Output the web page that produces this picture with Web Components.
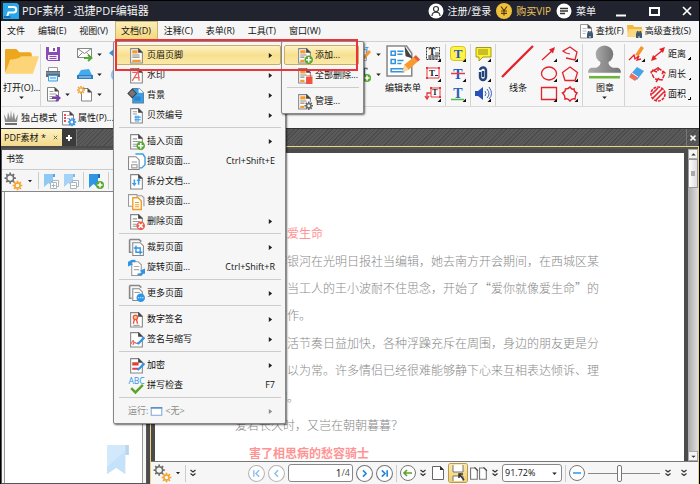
<!DOCTYPE html>
<html>
<head>
<meta charset="utf-8">
<title>PDF编辑器</title>
<style>
html, body { margin: 0; height: 100%; background: #000; overflow: hidden; }
body { font: 9px/12px "Open Sans", "Noto Sans CJK SC", sans-serif; color: #111; }
</style>
</head>
<body>
<app-window></app-window>
<script>
const T = (x, y, s, c, t, extra = '') => `<text x="${x}" y="${y}" font-size="${s}" fill="${c}" text-anchor="middle" font-family="Liberation Serif, serif" ${extra}>${t}</text>`;
const PAGE = '<path d="M2.5 1.500h7.500l3.500 3.500v10h-11z" fill="#fff" stroke="#858585"/><path d="M9.500 1l4.500 4.500h-4.500z" fill="#444"/>';
const LINES = '<path d="M4.500 5.500h4M4.500 8h6.500M4.500 10.500h6.500M4.500 12.500h4" stroke="#999"/>';
const PLUS = '<circle cx="12" cy="12" r="4" fill="#5aa832"/><path d="M12 9.500v5M9.500 12h5" stroke="#fff" stroke-width="1.500"/>';
const TICK = '<path d="M16 12.500v3.500h-3.500z" fill="#111"/>';
const BOXES = '<g fill="#fff" stroke="#a9b4bd"><path d="M9.500 7.500h6v6h-6z"/><path d="M7.500 9.500h6v6h-6z"/></g>';
const gear = (cx, cy, r, c) => `<g transform="translate(${cx} ${cy})"><circle r="${r}" fill="none" stroke="${c}" stroke-width="1.300"/>` +
  [0, 45, 90, 135].map(a => `<path transform="rotate(${a})" d="M0 ${-r - 2}v1.800M0 ${r + .2}v1.800" stroke="${c}" stroke-width="1.500"/>`).join('') + `</g>`;
const PENCIL = (c = '#f59a36') => `<path d="M6 14l1-3 6-7 2 2-6 7z" fill="${c}"/><path d="M6 14l1-3 2 2z" fill="#f9d9a5"/>`;
const BINOC = '<path d="M9 15v-4l1-3h1.500l.5 2 .5-2h1.500l1 3v4h-2.500v-2h-1v2z" fill="#3d5872"/>';
const ICONS = {
  logo: '<path d="M0 0h14l2 2v14h-16z" fill="#27a7ea"/><path d="M5 4h5.500a2.500 2.500 0 0 1 0 5.500h-5l-1.500 4.500" fill="none" stroke="#fff" stroke-width="2"/><path d="M5 7h5" stroke="#27a7ea"/><path d="M1 13h6l1 2h-7z" fill="#156fb8"/>',
  user: '<circle cx="8" cy="8" r="7.500" fill="#fff"/><circle cx="8" cy="6" r="2.500" fill="none" stroke="#333" stroke-width="1.200"/><path d="M4 13c0-5 8-5 8 0" fill="none" stroke="#333" stroke-width="1.200"/>',
  coin: '<circle cx="8" cy="8" r="8" fill="#f0c23c"/><path d="M5 3.500l3 4 3-4M8 7.500v5M5 8h6M5 10.300h6" stroke="#5b3b10" fill="none" stroke-width="1.200"/>',
  list: '<circle cx="8" cy="8" r="7.500" fill="#fff"/><path d="M4 5.500h8M4 8h8M4 10.500h5" stroke="#333" stroke-width="1.300"/>',
  min: '<path d="M3 12.500h10" stroke="#fff" stroke-width="2"/>',
  max: '<path d="M4 5h9v7h-9z" fill="none" stroke="#fff" stroke-width="2"/>',
  close: '<path d="M4 4l8 8M12 4l-8 8" stroke="#fff" stroke-width="1.700"/>',
  find: PAGE.replace(/#858585/, '#999') + '<path d="M4.500 5.500h4M4.500 8h4M4.500 10.500h3" stroke="#bbb"/>' + BINOC,
  afind: '<path d="M0 2h6l1 2h8v10h-14z" fill="#f5b836"/><path d="M0 14l2-8h14l-2 8z" fill="#fbd77e"/>' + BINOC,
  open: '<path d="M0 27V5q0-1 1-1h10l3 3h10q2 0 2 2v5l-20 2z" fill="#eda71f"/><path d="M0 28l5-14q8 0 11-3h17l-6 17z" fill="#fdd477"/>',
  save: '<path d="M1 1h14v14h-12l-2-2z" fill="#8a4bb5"/><path d="M4 1h8v5h-8z" fill="#fff"/><path d="M3 9h10v5h-10z" fill="#f5eefa"/><path d="M4.500 10.500h7M4.500 12.500h7" stroke="#8a4bb5"/><path d="M9 2v3" stroke="#8a4bb5" stroke-width="2"/>',
  print: '<path d="M3.500 1.500h9v5h-9z" fill="#fff" stroke="#999"/><path d="M1 5h14v6h-14z" fill="#5b6b78"/><path d="M1 6h14v2h-14z" fill="#7b8b97"/><path d="M3.500 9.500h9v5.500h-9z" fill="#dff1fd" stroke="#3a9de0"/><path d="M5 12h6" stroke="#3a9de0"/>',
  export: PAGE + LINES + '<path d="M7 12h7M11 9l3.500 3-3.500 3" stroke="#7a3fb0" stroke-width="2" fill="none"/>',
  mail: '<path d="M.5 2.500h14v9h-14z" fill="#fff" stroke="#888"/><path d="M.5 2.500l7 5 7-5M.5 11.500l5-5M14.500 11.500l-5-5" stroke="#888" fill="none"/><path d="M7 12h7M11 9l3.500 3-3.500 3" stroke="#55a532" stroke-width="1.800" fill="none"/>',
  scan: '<path d="M4 4l8-1 3 6h-14z" fill="#45a9ee"/><path d="M0 9h16v4h-16z" fill="#2b7fc1"/><path d="M2 11h12" stroke="#bfe2fa"/>',
  newp: '<path d="M4.500 2.500h6.500l3.500 3.500v9h-10z" fill="#fff" stroke="#858585"/><path d="M10.500 2l4.500 4.500h-4.500z" fill="#444"/><path d="M4 0v8M0 4h8M1 1l6 6M7 1l-6 6" stroke="#f5a12c" stroke-width="1.500"/><circle cx="4" cy="4" r="1.500" fill="#fff"/>',
  undo: '<path d="M16 10c0-4-6-4-13-3M7 3l-5 4 5 4" fill="none" stroke="#2d94e8" stroke-width="2.500"/>',
  redo: '<path d="M12 14a6 6 0 1 1 2-8" fill="none" stroke="#8cc7f5" stroke-width="2"/>',
  fdoc: '<path d="M1.500 3.500h9v11h-9z" fill="#fff" stroke="#9ab"/><path d="M3 7h5M3 9h5M11 1v6M9.500 1.500h3" stroke="#3d9de8"/>' + PENCIL(),
  tplus: T(8, 9, 11, '#555', 'T', 'stroke="#555" stroke-width=".3"') + '<circle cx="11" cy="12" r="4" fill="#5aa832"/><path d="M11 9.500v5M8.500 12h5" stroke="#fff" stroke-width="1.500"/>',
  form: '<path d="M1 1h19l5 7v22h-24z" fill="#fff" stroke="#888" stroke-width="1.500"/><path d="M18 1l8 12-7-2z" fill="#444"/><path d="M5 6h4v4h-4zM5 14h4v4h-4zM5 23h12v3h-12z" fill="none" stroke="#3394dc" stroke-width="1.500"/><path d="M11 6h6M11 9h5M11 15h6M11 18h4" stroke="#3394dc" stroke-width="1.500"/><path d="M16 26l2-7 11-9 4 4-11 10z" fill="#f79a31"/><path d="M27 12l2-2 4 4-2 2z" fill="#e65a3c"/><path d="M16 26l2-7 4 5z" fill="#fad9a4"/>',
  tsel: '<path d="M1.500 1.500h13v12h-13z" fill="none" stroke="#333" stroke-dasharray="2 1"/>' + T(7, 9, 10, '#222', 'T', 'font-weight="bold"') + '<path d="M3 10h10M3 12h10M11 6v5M13 6v5M5 9v5M8 9v5" stroke="#555"/>' + TICK,
  tbox: '<path d="M2 2h12v10h-12z" fill="#fff" stroke="#e8373e"/><path d="M1 1h2v2h-2zM13 1h2v2h-2zM1 11h2v2h-2z" fill="#e8373e"/>' + T(7, 10, 9, '#222', 'T', 'font-weight="bold"') + '<path d="M10 9.500h3" stroke="#222"/>' + TICK,
  tcall: '<path d="M6 2h9v9h-9z" fill="#fff" stroke="#e8373e"/><path d="M5 1h2v2h-2zM14 1h2v2h-2zM14 10h2v2h-2z" fill="#e8373e"/><path d="M6 7h-4v5M0 10l2 3 2-3" fill="none" stroke="#e8373e" stroke-width="1.300"/>' + T(10, 9, 8, '#222', 'T', 'font-weight="bold"') + TICK,
  thl: '<rect x=".5" y=".5" width="15" height="14" rx="3" fill="#fff34a" stroke="#d9c51c"/>' + T(8, 12, 13, '#2458c8', 'T', 'font-weight="bold"') + TICK,
  tst: T(8, 13, 14, '#2458c8', 'T', 'font-weight="bold"') + '<path d="M1 7.500h14" stroke="#ea3a3f" stroke-width="1.500"/>' + TICK,
  tun: T(8, 12, 14, '#2a62b8', 'T', 'font-weight="bold"') + '<path d="M1 13.500h13" stroke="#49bf48" stroke-width="1.500"/>' + TICK,
  note: '<path d="M1 1.500h15v9.500h-8l-4 4v-4h-3z" fill="#fff22e" stroke="#a49a18"/><path d="M3 4h10M3 6h10M3 8h10" stroke="#918a20"/>' + TICK,
  clip: '<path d="M5 6v5a3 3 0 0 0 6 0v-6a3 3 0 0 0-6-1M8 5v6" fill="none" stroke="#26457f" stroke-width="2.400"/>' + TICK,
  sound: '<path d="M0 5h3l5-4v13l-5-4h-3z" fill="#2952b8"/><path d="M10 5q2 3 0 5M12 3q4 5 0 9M14 1q5 7 0 12" fill="none" stroke="#3b62b5"/>' + TICK,
  line: '<path d="M1 31L31 1" stroke="#e3222c" stroke-width="2.200"/>',
  arrow: '<path d="M1 14L13 3" stroke="#e3222c" stroke-width="1.300"/><path d="M14 1l-6 2.500 4 4z" fill="#e3222c"/>' + TICK,
  oval: '<ellipse cx="8" cy="7.500" rx="7.500" ry="6.500" fill="none" stroke="#e3222c" stroke-width="1.300"/>' + TICK,
  rect: '<path d="M.5 1.500h15v12h-15z" fill="none" stroke="#e3222c" stroke-width="1.300"/>' + TICK,
  poly: '<path d="M4 7L1 5 8 1l7 5-2 8-9-2" fill="none" stroke="#e3222c" stroke-width="1.300"/><path d="M4 7l4 1" stroke="#e3222c"/>' + TICK,
  pent: '<path d="M8 1l7.500 5.500-2.500 8h-10L.5 6.500z" fill="none" stroke="#e3222c" stroke-width="1.300"/>' + TICK,
  cloud: '<path d="M8 1q2 3 4 2 0 3 3 4-2 2-2 6-3-1-5 2-2-3-5-2 0-4-2.500-6 3-1 3-4 3 0 4.500-2z" fill="none" stroke="#e3222c" stroke-width="1.400"/>' + TICK,
  stamp: '<defs><linearGradient id="g"><stop stop-color="#aaa"/><stop offset="1" stop-color="#747474"/></linearGradient></defs><circle cx="16" cy="9" r="8.500" fill="url(#g)"/><path d="M12 15h8q-1 5 4 7h5q3 1 3 5h-32q0-4 3-5h5q5-2 4-7z" fill="url(#g)"/><path d="M2 28h28v2h-28z" fill="#fff"/><path d="M1 30h30v2.500h-30z" fill="#6db33c"/>',
  pen: '<path d="M6 9l6-9 3 2-6 9z" fill="#f5962c"/><path d="M5 11l1-3 3 2z" fill="#fad9a4"/><path d="M0 14l5-5 1 4 4-3-2 4 4-1" fill="none" stroke="#e3222c" stroke-width="1.300"/>' + TICK,
  erase: '<path d="M1 9l7-8 7 4-7 9z" fill="#45a3e8"/><path d="M0 11l3-4 6 4-3 4z" fill="#f66e57"/><path d="M3 7l6 4" stroke="#fff"/>',
  dist: '<path d="M3 12L13 4" stroke="#e3222c" stroke-width="1.500"/><path d="M15 1l-6 2 4 4zM1 15l6-2-4-4z" fill="#e3222c"/>',
  peri: '<path d="M4 12L1 6l7-4 7 5-3 7-7-1" fill="none" stroke="#e3222c" stroke-width="1.500" stroke-dasharray="4 1"/><path d="M2 4l5 2M8 1v4M14 5l-2 3M9 12l-3 4" stroke="#e3222c" stroke-width="1.500"/>',
  area: '<circle cx="8" cy="8" r="7" fill="none" stroke="#e3222c" stroke-width="1.600" stroke-dasharray="3 1"/><path d="M2 8l6-6M3 12l9-9M6 14l8-8" stroke="#e3222c" stroke-width="1.600"/>',
  crown: '<path d="M1 4l3 6 1-8 2 7 1-9 1 9 2-7 1 8 3-6-1 8h-12z" fill="#8b8b8b"/><path d="M2 13h12v2h-12z" fill="#6e6e6e"/>',
  props: PAGE + '<path d="M4 5h2M4 8h2M4 11h2" stroke="#e3525a" stroke-width="2"/><path d="M7 5.500h3M7 8.500h3" stroke="#e99"/>' + gear(12, 12, 2.2, '#2f96e6'),
  headers: PAGE + '<path d="M4 3h5v3h-5zM4 12h8v2h-8z" fill="#f59b2b"/><path d="M4 7.500h7M4 9.500h7" stroke="#888"/>',
  hadd: PAGE + '<path d="M4 3h5v3h-5zM4 12h4v2h-4z" fill="#f59b2b"/><path d="M4 7.500h6M4 9.500h4" stroke="#888"/>' + PLUS,
  hdel: PAGE + '<path d="M4 3h5v3h-5zM4 12h4v2h-4z" fill="#f59b2b"/><path d="M4 7.500h6M4 9.500h4" stroke="#888"/><path d="M10 10h5v5.500h-5zM9.500 8.500h6" fill="#ee5340" stroke="#ee5340"/>',
  hman: PAGE + '<path d="M4 3h5v3h-5zM4 12h4v2h-4z" fill="#f59b2b"/><path d="M4 7.500h6M4 9.500h4" stroke="#888"/><circle cx="12" cy="12" r="4" fill="#f6f6f6"/>' + gear(12, 12, 2, '#666'),
  water: PAGE + '<path d="M4 13L9.500 4l1 9M6 10h5M4 5h5" fill="none" stroke="#e86660" stroke-width="1.200"/>',
  bg: '<path d="M4.500 1.500h6l4 4v9.500h-10z" fill="#39a0ea" stroke="#5a7f9c"/><path d="M10 1l4.500 4.500h-4.500z" fill="#fff"/><path d="M4 2l4 4-4 4-4-4z" fill="#777" stroke="#444"/><path d="M6 9h6v4h-6z" fill="#2c86cf"/>',
  bates: PAGE + '<path d="M4.500 4.500h4M4.500 6.500h4" stroke="#999"/><path d="M7.500 8v6M9.500 8v6M6 9.500h6M6 12h6" stroke="#3d9de8"/>',
  insert: PAGE + LINES + PLUS,
  extract: '<path d="M7 1h7l2 3v7l-3 3h-5" fill="#fff" stroke="#3d9de8" stroke-width="1.300"/><path d="M.5 3.500h7l3 3v9h-10z" fill="#fff" stroke="#888"/><path d="M3.500 8.500h5M3.500 11h5v3h-5z" fill="none" stroke="#999"/>',
  split: PAGE + '<path d="M6 6v5M10 6v5" stroke="#3d9de8" stroke-width="1.500"/><path d="M3.500 9.500L6 12.500l2-3zM8 7.500L10 4.500l2 3z" fill="#3d9de8"/>',
  replace: '<path d="M.5 1.500h8v11h-8z" fill="#fff" stroke="#999"/><path d="M9 2.500h4l2 2v8" fill="none" stroke="#999"/><path d="M4.500 4.500h5l3 3v8h-8z" fill="#fff" stroke="#f29b25" stroke-width="1.300"/><path d="M6.500 9h4M6.500 11h4M6.500 13h4" stroke="#f29b25"/>',
  del: PAGE + LINES + '<circle cx="12" cy="12" r="4" fill="#ee5a45"/><path d="M10 10l4 4M14 10l-4 4" stroke="#fff" stroke-width="1.400"/>',
  crop: '<path d="M1.500.5h9l2 2M1.500.5v12h2" fill="none" stroke="#888" stroke-width="1.500"/><path d="M4.500 3.500h7l3 3v9h-10z" fill="#fff" stroke="#888"/><path d="M7.500 6v6.500h6M5.500 8.500h6v6" fill="none" stroke="#2f96e6" stroke-width="1.300"/>',
  rotate: '<path d="M3.500 2.500h6l3 3v10h-9z" fill="#fff" stroke="#999"/><path d="M5.500 7h5M5.500 10h5" stroke="#aaa"/><path d="M1 5Q2 1 7 2M15 11q-1 4-6 3.500" fill="none" stroke="#2f96e6" stroke-width="2"/><path d="M0 2v5l5-2zM16 14v-5l-5 2z" fill="#2f96e6"/>',
  more: '<path d="M1.500.5h9l2 2M1.500.5v12h2" fill="none" stroke="#888" stroke-width="1.500"/><path d="M4.500 3.500h6l3 3v8h-9z" fill="#fff" stroke="#888"/><path d="M6 7h5" stroke="#999"/><circle cx="12" cy="12" r="4" fill="#2f96e6"/><path d="M9.500 12h1M11.500 12h1M13.500 12h1" stroke="#fff"/>',
  sign: PAGE + '<circle cx="7" cy="6" r="2" fill="#fbd28d" stroke="#ec5746" stroke-width="1.300"/><path d="M6 8l-1 4M8 8l1 4" stroke="#ec5746" stroke-width="1.300"/><path d="M5 13.500h6" stroke="#999"/>',
  initials: PAGE + '<path d="M3 12c2-5 3-3 2 0s1-3 2-1 2-1 2 0" fill="none" stroke="#e86660"/><path d="M8 12l7-7 1 2-6 6z" fill="#2f96e6"/>',
  lock: PAGE + '<path d="M4 5h6v3h-6zM4 10h6v2h-6z" fill="#df3f3b"/><path d="M8 12l7-7 1 2-6 6z" fill="#2f96e6"/>',
  spell: `<text x="8" y="7" font-size="8" fill="#2f96e6" text-anchor="middle" font-family="Open Sans, sans-serif">ABC</text><path d="M3 10.500l4 4 7-7" fill="none" stroke="#5aa52a" stroke-width="2.300"/>`,
  run: '<path d="M1.500 3.500h13v9h-13z" fill="#fff" stroke="#7fa9d6" stroke-width="1.300"/><path d="M1 3.500h14" stroke="#5b8fc9" stroke-width="2"/>',
  gears: gear(5.5, 5.500, 3, '#6e6e6e') + gear(12, 12, 2.300, '#f5a023'),
  bm1: '<path d="M1 1h9v13l-4.500-4L1 14z" fill="#8ec8f5"/><path d="M10 1h2v3h-2z" fill="#5fa4dc"/>' + BOXES + '<path d="M8.500 12.500h4M10.500 10.500v4" stroke="#a9b4bd"/>',
  bm2: '<path d="M1 1h9v13l-4.500-4L1 14z" fill="#a5d3f7"/><path d="M10 1h2v3h-2z" fill="#7fb6e3"/>' + BOXES + '<path d="M8.500 12.500h4" stroke="#a9b4bd"/>',
  bm3: '<path d="M1 1h9v14l-4.500-4L1 15z" fill="#2f96e6"/><path d="M10 1h2v4h-2z" fill="#1d6db3"/>' + PLUS,
  bigbm: '<path d="M0 0h20v32l-10-7L0 32z" fill="#d2e8fb"/><path d="M0 24L20 7v25l-10-7-10 7z" fill="#c4e2fa"/><path d="M20 0h4v11h-4z" fill="#bcd5ec"/>',
  dd: '<path d="M4 6h8l-4 4.500z" fill="#222"/>',
  sub: '<path d="M5 3.500L11 8l-6 4.500z" fill="#222"/>',
  chev: '<path d="M3 2l5 4 5-4M3 9l5 4 5-4" fill="none" stroke="#333" stroke-width="2.500"/>',
  tabx: '<path d="M4 4l8 8M12 4l-8 8" stroke="#555" stroke-width="2"/>',
  plus: '<path d="M8 2v12M2 8h12" stroke="#fff" stroke-width="4"/>',
  tabclose: '<path d="M3 3l10 10M13 3l-10 10" stroke="#fff" stroke-width="3.500"/>',
  up: '<path d="M3 10h10l-5-5z" fill="#333"/>',
  c1: '<circle cx="8" cy="8" r="7.500" fill="#fff" stroke="#b5b5b5"/><path d="M5.500 5v6M10.500 5l-3 3 3 3" fill="none" stroke="#86bff0" stroke-width="1.300"/>',
  c2: '<circle cx="8" cy="8" r="7.500" fill="#fff" stroke="#b5b5b5"/><path d="M9.500 5l-3 3 3 3" fill="none" stroke="#86bff0" stroke-width="1.300"/>',
  c3: '<circle cx="8" cy="8" r="7.500" fill="#fff" stroke="#777"/><path d="M6.500 5l3 3-3 3" fill="none" stroke="#1d87e0" stroke-width="1.500"/>',
  c4: '<circle cx="8" cy="8" r="7.500" fill="#fff" stroke="#777"/><path d="M5.500 5l3 3-3 3M10.500 5v6" fill="none" stroke="#1d87e0" stroke-width="1.500"/>',
  back: '<circle cx="8" cy="8" r="7.500" fill="#fff" stroke="#777"/><path d="M12 8h-8M7 5l-3 3 3 3" fill="none" stroke="#5aa52a" stroke-width="1.700"/>',
  minus: '<circle cx="8" cy="8" r="7.500" fill="#fff" stroke="#777"/><path d="M4 8h8" stroke="#2f96e6" stroke-width="1.500"/>',
  single: '<path d="M2.500 1.500h8l3 3v10h-11z" fill="#fff" stroke="#666"/><path d="M10 1l4 4h-4z" fill="#333"/>',
  cont: '<path d="M3 0v7h10V0M3 16v-5h10v5" fill="#fff" stroke="#777"/><path d="M9 9l5 6M9 13V9h4" stroke="#333" fill="none" stroke-width="1.500"/>',
  two: '<path d="M.5 3.500h4l2 2v8h-6zM8.500 3.500h4l2 2v8h-6z" fill="#fff" stroke="#777"/><path d="M4 3l3 3M12 3l3 3" stroke="#444"/>'
};
const BIG = { open: '0 0 33 33', form: '0 0 33 33', line: '0 0 33 33', stamp: '0 0 33 33', bigbm: '0 0 24 32' };

function define(name, css, html) {
  customElements.define(name, class extends HTMLElement {
    constructor() {
      super();
      const t = document.createElement('template');
      t.innerHTML = `<style>*{box-sizing:border-box}button,input,select{font:inherit;color:inherit;border:0;background:none;padding:0;margin:0}${css}</style>` +
        (typeof html === 'function' ? html(this) : html);
      this.attachShadow({ mode: 'open' }).append(t.content.cloneNode(true));
    }
  });
}
const ic = (n, s = '') => `<ui-icon name="${n}" ${s ? `style="--s:${s}px"` : ''}></ui-icon>`;
const btn = (n, label, s) => `<button aria-label="${label}">${ic(n, s)}</button>`;

define('ui-icon', ':host{display:block;flex:none;width:var(--s,16px);height:var(--h,var(--s,16px))}svg{display:block;width:100%;height:100%;overflow:visible}',
  el => { const n = el.getAttribute('name'); return `<svg viewBox="${BIG[n] || '0 0 16 16'}" aria-hidden="true">${ICONS[n]}</svg>`; });

define('title-bar', `:host{display:flex;align-items:center;height:21px;padding:0 4px 0 2px;background:#21232e;border-top:1px solid #000;color:#f4f4f4;font-size:10px}
  h1{font:11px/16px "Open Sans","Noto Sans CJK SC",sans-serif;margin:0 auto 0 3px}
  button{display:flex;align-items:center;gap:4px;margin-left:5px}.gold{color:#f0c75a}
  .win{margin:0 0 0 17px}`,
  `${ic('logo')}<h1>PDF素材 - 迅捷PDF编辑器</h1>
  <button>${ic('user')}注册/登录</button><button class="gold">${ic('coin')}购买VIP</button><button>${ic('list')}菜单</button>
  <button class="win" aria-label="最小化">${ic('min')}</button><button class="win" aria-label="最大化">${ic('max')}</button><button class="win" aria-label="关闭">${ic('close')}</button>`);

define('menu-bar', `:host{display:flex;align-items:stretch;height:21px;background:#f6f6f6;border-bottom:1px solid #d0d0d0;padding-right:8px}
  button{padding:0 7px 0 6px;white-space:nowrap;display:flex;align-items:center;gap:2px}
  button.on{background:linear-gradient(#fbeebb,#f4d676);box-shadow:inset 0 0 0 1px #c9b474}
  .r{padding:0 0 0 3px}span{flex:1}`,
  `<button>文件</button><button>编辑(E)</button><button>视图(V)</button><button class="on">文档(D)</button><button>注释(C)</button><button>表单(R)</button><button>工具(T)</button><button>窗口(W)</button><span></span>
  <button class="r">${ic('find')}查找(F)</button><button class="r">${ic('afind')}高级查找(S)</button>`);

define('tool-grid', `:host{display:grid;grid-template-rows:repeat(3,20px);grid-auto-flow:column;align-items:center;align-content:start;column-gap:5px;padding:0 4px}
  :host([flush]){padding-right:0}:host([end]){padding-right:8px}
  :host([line]){border-left:1px solid #d4d4d4}`, '<slot></slot>');
define('big-tool', `:host{display:block;padding:0 0 0 2px}button{display:flex;flex-direction:column;align-items:center;gap:2px;white-space:nowrap;padding-top:1px}
  ui-icon{--s:34px}.dd{--s:9px;margin-top:-3px}.lab{height:12px;margin-top:1px}:host([line]){border-left:1px solid #d4d4d4;padding:0 2px 0 5px}`,
  el => `<button>${ic(el.getAttribute('icon'))}<span class="lab"><slot></slot></span>${el.hasAttribute('drop') ? '<ui-icon class="dd" name="dd"></ui-icon>' : ''}</button>`);
define('small-tool', `:host{display:block}button{display:flex;align-items:center;gap:2px;white-space:nowrap}.dd{--s:9px}.tick{width:3px;height:3px;background:linear-gradient(135deg,transparent 50%,#111 50%);align-self:flex-end;margin-bottom:2px}`,
  el => `<button aria-label="${el.getAttribute('label') || ''}">${ic(el.getAttribute('icon'))}<slot></slot>${el.hasAttribute('drop') ? '<ui-icon class="dd" name="dd"></ui-icon>' : ''}${el.hasAttribute('tick') ? '<i class="tick"></i>' : ''}</button>`);
const st = (i, a = '', t = '') => `<small-tool icon="${i}" ${a} label="${t || i}">${t}</small-tool>`;
define('ribbon-bar', `:host{display:block;background:#f7f7f7}
  .main{display:flex;height:65px;padding:2px 0 0;border-bottom:1px solid #dadada}
  .gap{flex:1}.quick{display:flex;align-items:center;height:21px;padding-left:2px;gap:3px}`,
  `<div class="main"><big-tool icon="open" drop>打开(O)...</big-tool>
  <tool-grid line>${st('save')}${st('print')}${st('export', 'drop')}${st('mail', 'drop')}${st('scan', 'drop')}${st('newp', 'drop')}${st('undo')}${st('redo')}</tool-grid>
  <div class="gap"></div>
  <tool-grid flush>${st('fdoc', 'drop')}${st('tplus', 'drop')}</tool-grid>
  <big-tool icon="form">编辑表单</big-tool>
  <tool-grid>${st('tsel')}${st('tbox')}${st('tcall')}</tool-grid>
  <tool-grid line>${st('thl')}${st('tst')}${st('tun')}</tool-grid>
  <tool-grid line>${st('note')}${st('clip')}${st('sound')}</tool-grid>
  <big-tool icon="line" line>线条</big-tool>
  <tool-grid>${st('arrow')}${st('oval')}${st('rect')}${st('poly')}${st('pent')}${st('cloud')}</tool-grid>
  <big-tool icon="stamp" line drop>图章</big-tool>
  <tool-grid line end>${st('pen')}${st('erase')}<i></i>${st('dist', 'tick', '距离')}${st('peri', 'tick', '周长')}${st('area', 'tick', '面积')}</tool-grid></div>
  <div class="quick">${st('crown', '', '独占模式')}${st('props', '', '属性(P)...')}</div>`);

define('tab-strip', `:host{display:flex;height:18px;background:repeating-linear-gradient(135deg,#4c4c4c 0 1px,#5a5a5a 1px 3px);border-top:1px solid #333;align-items:stretch}
  .tab{width:61px;background:linear-gradient(#fdf1c0,#f3d98a);display:flex;align-items:center;padding:0 3px;white-space:nowrap;justify-content:space-between}
  .add{width:15px;display:grid;place-items:center;background:#3b3b3b;border-right:1px solid #777}
  .x{margin-left:auto;width:13px;border-left:1px solid #777;display:grid;place-items:center}`,
  `<button class="tab">PDF素材 *${ic('tabx', 7)}</button><button class="add" aria-label="新标签">${ic('plus', 8)}</button><button class="x" aria-label="关闭">${ic('tabclose', 8)}</button>`);

define('bookmark-pane', `:host{display:flex;flex-direction:column;background:#f6f6f6;border:solid #555;border-width:2px 1px 1px 1px}
  h2{font:inherit;margin:0;padding:3px 4px;height:20px;border-bottom:1px solid #ccc}
  nav{display:flex;align-items:center;gap:4px;height:22px;padding-left:2px;border-bottom:1px solid #888}i{height:17px;border-left:1px solid #ccc}
  .body{flex:1;background:#fff;margin:0 3px 0 2px;border:solid #999;border-width:0 1px;display:flex;align-items:flex-end;justify-content:flex-end;padding:0 13px 9px}
  .body ui-icon{--s:22px;--h:29px}`,
  `<h2>书签</h2><nav>${btn('gears', '选项', 18)}${btn('dd', '展开', 8)}<i></i>${btn('bm1', '展开书签')}${btn('bm2', '折叠书签')}<i></i>${btn('bm3', '添加书签')}<i></i></nav><div class="body">${ic('bigbm')}</div>`);

define('doc-page', `:host{display:block;background:#fff;overflow:hidden;color:#888;font:300 12px/27px "Noto Sans CJK SC",sans-serif;padding:66px 0 0 80px}
  p,h2,h3{margin:0 0 1px;padding-left:40px;font-size:12px;line-height:27px;white-space:nowrap}h2,h3{color:#ff9494;font-weight:400}
  h3{font-weight:700;padding-left:14px}.out{padding:0}`,
  `<h2>像爱生命</h2>
  <p>李银河在光明日报社当编辑，她去南方开会期间，在西城区某<br>厂当工人的王小波耐不住思念，开始了“爱你就像爱生命”的<br>写作。</p>
  <p>生活节奏日益加快，各种浮躁充斥在周围，身边的朋友更是分<br>习以为常。许多情侣已经很难能够静下心来互相表达倾诉、理<br>解。</p>
  <p class="out">爱若长久时，又岂在朝朝暮暮？</p><h3>害了相思病的愁容骑士</h3>`);

define('scroll-bar', `:host{display:flex;flex-direction:column;width:10px;background:linear-gradient(90deg,#aaa,#ddd)}
  button{height:10px;background:#f4f4f4;border:1px solid #aaa;display:grid;place-items:center}
  .thumb{height:29px;background:linear-gradient(90deg,#fff,#ddd);border:1px solid #999;display:grid;place-items:center}.thumb i{width:4px;height:5px;background:#aaa}.sp{flex:1}.dn ui-icon{transform:rotate(180deg)}`,
  `<button aria-label="向上">${ic('up', 7)}</button><div class="thumb"><i></i></div><div class="sp"></div><button class="dn" aria-label="向下">${ic('up', 7)}</button>`);

define('status-bar', `:host{display:flex;align-items:center;height:23px;background:#f6f6f6;border-top:1px solid #777;padding:0 10px 0 2px;gap:3px}
  i{height:17px;border-left:1px solid #ccc}.sp{flex:1}.last{margin-left:5px}
  .pg{display:flex;align-items:center;width:65px;height:18px;border:1px solid #888;border-radius:3px;background:#fff;padding-right:2px}
  .pg input{flex:1;min-width:0;text-align:right;outline:0;font-size:10px}.pg span{color:#555;font-size:9px}
  .on{background:linear-gradient(#fbe9ac,#f2cf70);box-shadow:0 0 0 1px #b89a4e;border-radius:2px;padding:1px}
  label.z{position:relative;display:flex;width:60px;height:18px;border:1px solid #888;border-radius:3px;background:#fff;align-items:center;padding-right:2px}
  select{appearance:none;flex:1;min-width:0;padding-left:2px;outline:0}
  input[type=range]{appearance:none;width:72px;height:18px;margin:0 1px 0 0}
  input[type=range]::-webkit-slider-runnable-track{height:1px;background:#888}
  input[type=range]::-webkit-slider-thumb{appearance:none;width:5px;height:17px;margin-top:-8px;background:#fff;border:1px solid #777;border-radius:2px}`,
  `${btn('gears', '选项', 18)}${btn('dd', '展开', 8)}<i></i>${btn('chev', '更多', 8)}<div class="sp"></div>
  ${btn('c1', '首页', 17)}${btn('c2', '上一页', 17)}<div class="pg"><input aria-label="页码" value="1"><span>/4</span></div>${btn('c3', '下一页', 17)}${btn('c4', '末页', 17)}<i></i>${btn('back', '后退')}${btn('chev', '更多', 8)}
  ${btn('single', '单页')}<button class="on" aria-label="连续">${ic('cont')}</button>${btn('two', '双页', 18)}${btn('chev', '更多', 8)}
  <label class="z"><select aria-label="缩放"><option>91.72%</option></select>${ic('dd', 9)}</label><i></i>${btn('minus', '缩小')}
  <input type="range" aria-label="缩放比例" min="0" max="100" value="44">${btn('chev', '更多', 8)}<button class="last" aria-label="更多">${ic('chev', 8)}</button>`);

define('menu-row', `:host{display:block}button{display:flex;align-items:center;width:100%;height:20px;padding:0 5px 0 11px;gap:2px;white-space:nowrap;text-align:left;border:1px solid transparent;border-radius:2px}
  :host([on]) button{background:linear-gradient(#fdf2c6,#f7e08f 50%,#fae9a8);border-color:#c9ae62}
  :host([tight]) button{padding:0 0 0 11px}
  :host([off]){color:#8a8a8a}
  span{flex:1}em{font-style:normal}.a{--s:9px}:host([off]) .a{opacity:.5}`,
  el => `<button>${el.hasAttribute('pre') ? `<em>${el.getAttribute('pre')}</em>` : ''}${ic(el.getAttribute('icon'), el.hasAttribute('pre') ? 13 : 17)}<span><slot></slot></span>${el.getAttribute('key') ? `<em>${el.getAttribute('key')}</em>` : ''}${el.hasAttribute('sub') ? '<ui-icon class="a" name="sub"></ui-icon>' : ''}</button>`);
define('menu-popup', `:host{display:block;background:#f6f6f6;border:1px solid #888;border-radius:2px;box-shadow:1px 1px 2px rgba(0,0,0,.6);padding:3px 4px 2px 2px}
  ::slotted(hr){margin:2px 0 3px 3px;border:0;border-top:1px solid #ccc}`, '<slot></slot>');

const row = (i, t, a = '') => `<menu-row icon="${i}" ${a}>${t}</menu-row>`;
define('app-window', `:host{display:flex;flex-direction:column;height:100%;position:relative;border:solid #000;border-width:0 1px 2px 1px}
  .work{flex:1;display:flex;min-height:0;background:#4b4b4b}
  bookmark-pane{width:146px;margin:2px 3px 0 0}
  .doc{flex:1;min-width:0;display:flex;flex-direction:column;border:solid #efd47d;border-width:1px 1px 0 1px}
  .view{flex:1;display:flex;min-height:0;padding-left:4px;border-top:2px solid #555}
  doc-page{flex:1;margin:4px 4px 0 0;min-width:0}
  .m1{position:absolute;left:112px;top:41px;width:173px}
  .m2{position:absolute;left:280px;top:41px;width:83px}
  .mark{position:absolute;left:114px;top:39px;width:243px;height:32px;border:2px solid #ee3338;pointer-events:none}`,
  `<title-bar></title-bar><menu-bar></menu-bar><ribbon-bar></ribbon-bar><tab-strip></tab-strip>
  <div class="work"><bookmark-pane></bookmark-pane>
  <div class="doc"><div class="view"><doc-page></doc-page><scroll-bar></scroll-bar></div><status-bar></status-bar></div></div>
  <menu-popup class="m1">${row('headers', '页眉页脚', 'sub on')}${row('water', '水印', 'sub')}${row('bg', '背景', 'sub')}${row('bates', '贝茨编号', 'sub')}<hr>
  ${row('insert', '插入页面', 'sub')}${row('extract', '提取页面...', 'key="Ctrl+Shift+E"')}${row('split', '拆分文档...')}${row('replace', '替换页面...')}${row('del', '删除页面', 'sub')}<hr>
  ${row('crop', '裁剪页面', 'sub')}${row('rotate', '旋转页面...', 'key="Ctrl+Shift+R"')}<hr>${row('more', '更多页面', 'sub')}<hr>
  ${row('sign', '数字签名', 'sub')}${row('initials', '签名与缩写', 'sub')}<hr>${row('lock', '加密', 'sub')}${row('spell', '拼写检查', 'key="F7"')}<hr>
  ${row('run', '&lt;无&gt;', 'sub off pre="运行:"')}</menu-popup>
  <menu-popup class="m2">${row('hadd', '添加...', 'on tight')}${row('hdel', '全部删除...', 'tight')}<hr>${row('hman', '管理...', 'tight')}</menu-popup>
  <div class="mark"></div>`);
</script>
</body>
</html>
